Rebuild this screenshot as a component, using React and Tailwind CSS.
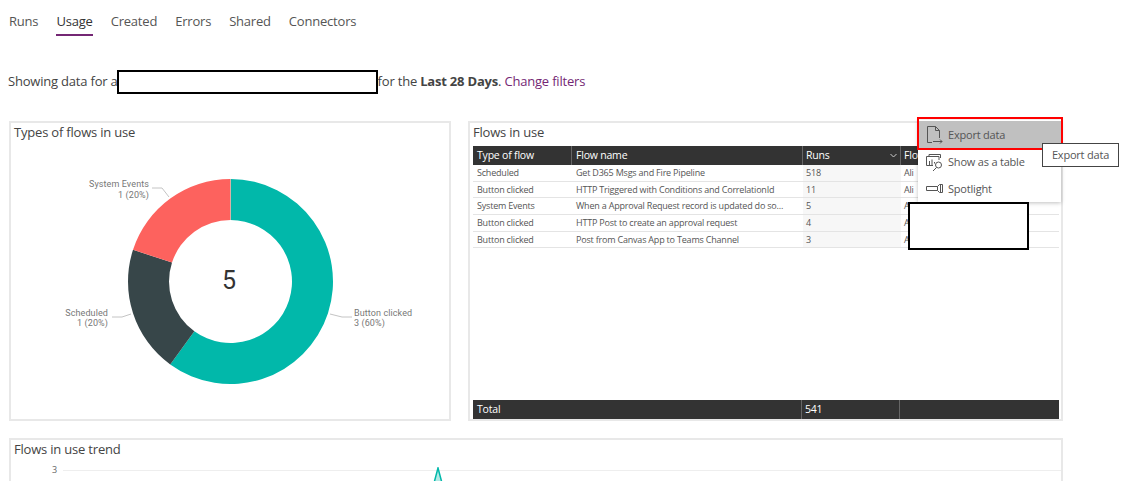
const tabs = ['Runs', 'Usage', 'Created', 'Errors', 'Shared', 'Connectors']

const rows = [
  ['Scheduled', 'Get D365 Msgs and Fire Pipeline', '518', 'Ali'],
  ['Button clicked', 'HTTP Triggered with Conditions and CorrelationId', '11', 'Ali'],
  ['System Events', 'When a Approval Request record is updated do so...', '5', 'A'],
  ['Button clicked', 'HTTP Post to create an approval request', '4', 'A'],
  ['Button clicked', 'Post from Canvas App to Teams Channel', '3', 'A'],
]

// cx/cy/radii for the donut, slices go clockwise from 12 o'clock
const CX = 219.5
const CY = 139.5
const R = 102.5
const r = 61.5

function slicePath(from, to) {
  const pt = (rad, frac) => {
    const a = frac * 2 * Math.PI
    return `${(CX + rad * Math.sin(a)).toFixed(2)} ${(CY - rad * Math.cos(a)).toFixed(2)}`
  }
  const large = to - from > 0.5 ? 1 : 0
  return `M${pt(R, from)} A${R} ${R} 0 ${large} 1 ${pt(R, to)} L${pt(r, to)} A${r} ${r} 0 ${large} 0 ${pt(r, from)} Z`
}

function Donut() {
  return (
    <svg width="437" height="260" className="block mt-[1px] font-['Roboto',sans-serif]">
      <path d={slicePath(0, 0.6)} fill="#01b8aa" />
      <path d={slicePath(0.6, 0.8)} fill="#374649" />
      <path d={slicePath(0.8, 1)} fill="#fd625e" />
      <line x1={CX} y1={CY - R} x2={CX} y2={CY - r} stroke="#d8b0a8" strokeWidth="1" />

      <g fill="none" stroke="#c4c4c4" strokeWidth="1">
        <path d="M158 55 L151 46 L141 46" />
        <path d="M120 172 L111 175 L101 175" />
        <path d="M319 172 L331 175 L341 175" />
      </g>

      <g fill="#777" fontSize="9" letterSpacing="0.1">
        <text x="138" y="45" textAnchor="end">System Events</text>
        <text x="138" y="56" textAnchor="end">1 (20%)</text>
        <text x="97" y="174" textAnchor="end">Scheduled</text>
        <text x="97" y="184" textAnchor="end">1 (20%)</text>
        <text x="343" y="174">Button clicked</text>
        <text x="343" y="184">3 (60%)</text>
      </g>
      <text x={CX - 1.5} y={CY + 7} textAnchor="middle" fontSize="25" fill="#333">5</text>
    </svg>
  )
}

function FlowsTable() {
  return (
    <div className="flex-1 flex flex-col ml-[3px] mr-[2px] text-[9px] text-[#555]">
      <div className="grid grid-cols-[99px_231px_98px_1fr] h-[19px] bg-[#333] text-white text-[10.5px] items-center">
        <div className="pl-[4px] h-full flex items-center border-r border-[#666]">Type of flow</div>
        <div className="pl-[4px] h-full flex items-center border-r border-[#666]">Flow name</div>
        <div className="pl-[3px] pr-[3px] h-full flex items-center justify-between border-r border-[#666]">
          <span>Runs</span>
          <svg width="7" height="5" viewBox="0 0 7 5"><path d="M0.5 1 L3.5 4 L6.5 1" fill="none" stroke="#ccc" strokeWidth="1" /></svg>
        </div>
        <div className="pl-[3px]">Flow owner</div>
      </div>
      {rows.map(row => (
        <div key={row[1]} className="grid grid-cols-[99px_231px_98px_1fr] h-[16.7px] items-center border-b border-[#e4e4e4] whitespace-nowrap">
          <div className="pl-[4px]">{row[0]}</div>
          <div className="pl-[4px]">{row[1]}</div>
          <div className="pl-[3px] h-full flex items-center bg-[#f7f7f7]">{row[2]}</div>
          <div className="pl-[3px]">{row[3]}</div>
        </div>
      ))}
      <div className="flex-1" />
      <div className="grid grid-cols-[329px_98px_1fr] h-[19px] bg-[#333] text-white text-[10.5px] items-center">
        <div className="pl-[4px] pt-[1px] h-full flex items-center border-r border-[#666]">Total</div>
        <div className="pl-[3px] pt-[1px] h-full flex items-center border-r border-[#666]">541</div>
        <div />
      </div>
    </div>
  )
}

function ExportIcon() {
  return (
    <svg width="20" height="20" viewBox="0 0 20 20" fill="none" stroke="#555" strokeWidth="1">
      <path d="M7 17.5 H2.5 V1.5 H10.5 L14.5 5.5 V13" />
      <path d="M10.5 1.5 V5.5 H14.5" />
      <path d="M8 16.5 H17 M15 14.5 L17 16.5 L15 18.5" />
    </svg>
  )
}

function TableIcon() {
  return (
    <svg width="20" height="20" viewBox="0 0 20 20" fill="none" stroke="#555" strokeWidth="1">
      <path d="M4 3.5 V1.5 H15.5 V5" />
      <path d="M1.5 12.5 V3.5 H14 V7" />
      <path d="M4.5 8 V12 M7 6.5 V12 M9.5 9 V10.5" />
      <path d="M1.5 12.5 H8" />
      <circle cx="13.5" cy="12" r="3" />
      <path d="M11.5 14.5 L8 18" />
    </svg>
  )
}

function SpotlightIcon() {
  return (
    <svg width="20" height="20" viewBox="0 0 20 20" fill="none" stroke="#555" strokeWidth="1">
      <path d="M1.5 7.5 H12.5 V11.5 H1.5 Z" />
      <path d="M12.5 7.5 L14.5 5.5 H17.5 V13.5 H14.5 L12.5 11.5" />
      <path d="M15.5 5.5 V13.5" />
    </svg>
  )
}

function Menu() {
  return (
    <div className="absolute left-[918px] top-[120px] w-[143px] h-[82px] bg-white shadow-[0_1px_4px_rgba(0,0,0,0.25)] text-[11px] text-[#555] z-10">
      <div className="h-[28px] mt-[1px] flex items-center gap-[3px] pl-[7px] bg-[#c0c0c0]"><ExportIcon />Export data</div>
      <div className="h-[27px] flex items-center gap-[3px] pl-[7px]"><TableIcon />Show as a table</div>
      <div className="h-[26px] flex items-center gap-[3px] pl-[7px]"><SpotlightIcon />Spotlight</div>
    </div>
  )
}

export default function App() {
  return (
    <div className="relative w-[1132px] h-[481px] overflow-hidden bg-white text-[#444] tracking-[-0.2px] font-['Open_Sans','Noto_Sans',sans-serif]">
      <div className="flex pl-[9px] pt-[12px] text-[13px] h-[36px]">
        {tabs.map(tab => (
          <div
            key={tab}
            className={`mr-[18px] h-[24px] ${tab === 'Usage' ? 'text-[#333] border-b-2 border-[#742774]' : 'text-[#555]'}`}
          >
            {tab}
          </div>
        ))}
      </div>

      <div className="flex items-center h-[24px] mt-[34px] pl-[8px] text-[13px]">
        <span>Showing data for a</span>
        <div className="w-[261px] h-[24px] -ml-[1px] bg-white border-2 border-black shrink-0" />
        <span className="whitespace-pre">for the <b>Last 28 Days</b>. </span>
        <span className="text-[#742774]">Change filters</span>
      </div>

      <div className="flex gap-[17px] mt-[27px] pl-[9px] w-[1063px]">
        <div className="w-[442px] h-[300px] border-2 border-[#e8e8e8] flex flex-col">
          <div className="text-[13px] pl-[3px] leading-[18px]">Types of flows in use</div>
          <Donut />
        </div>
        <div className="flex-1 h-[300px] border-2 border-[#e8e8e8] flex flex-col">
          <div className="text-[13px] pl-[3px] leading-[18px] h-[23px]">Flows in use</div>
          <FlowsTable />
        </div>
      </div>

      <div className="ml-[9px] mt-[17px] w-[1054px] h-[60px] border-2 border-[#e8e8e8]">
        <div className="text-[13px] pl-[3px] leading-[18px]">Flows in use trend</div>
        <div className="relative flex items-center mt-[4px] h-[16px]">
          <span className="w-[46px] text-right text-[9px] text-[#666]">3</span>
          <div className="flex-1 ml-[6px] border-t border-[#eee]" />
          <svg width="12" height="16" className="absolute left-[421px] top-[5px]">
            <path d="M2 16 L6 1 L10 16" fill="#01b8aa" fillOpacity="0.3" stroke="#01b8aa" strokeWidth="1.5" />
          </svg>
        </div>
      </div>

      <Menu />

      {/* red highlight and tooltip on top of the menu */}
      <div className="absolute left-[917px] top-[117px] w-[146px] h-[33px] border-2 border-[#f00] z-20" />
      <div className="absolute left-[1042px] top-[143px] w-[77px] h-[24px] pt-[1px] border border-[#444] bg-white z-30 text-[11px] text-[#555] flex items-center justify-center">
        Export data
      </div>
      <div className="absolute left-[908px] top-[202px] w-[121px] h-[48px] bg-white border-2 border-black z-20" />
    </div>
  )
}
